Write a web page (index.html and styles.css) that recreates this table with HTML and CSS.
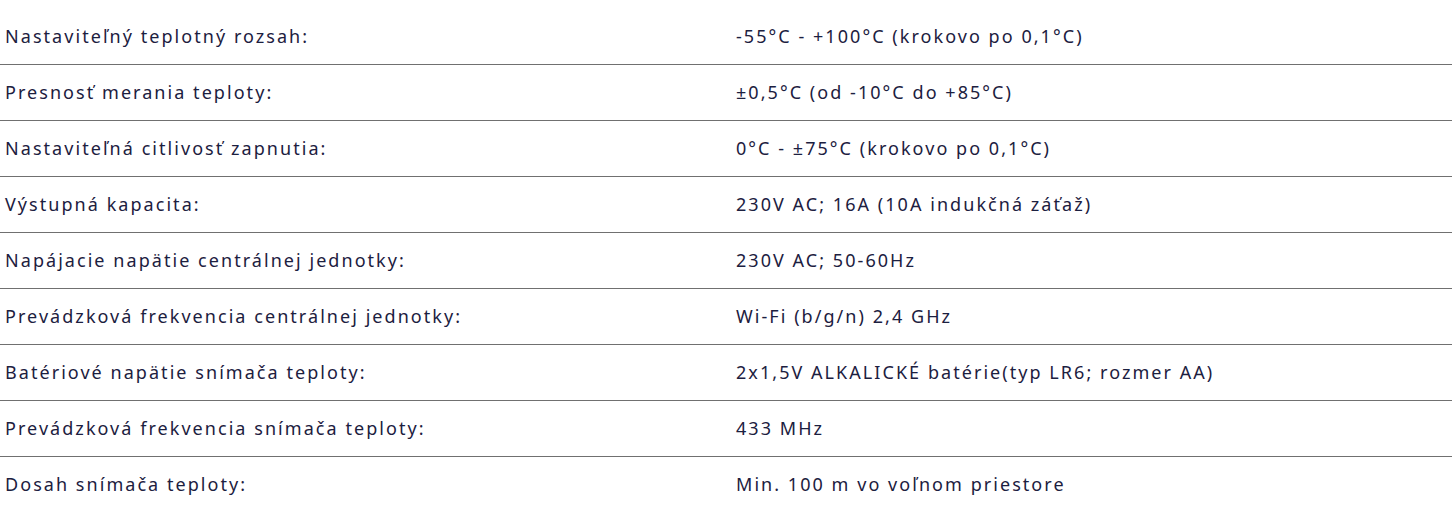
FILE: index.html
```html
<!DOCTYPE html>
<html lang="sk">
<head>
<meta charset="utf-8">
<title>Parametre</title>
<link rel="stylesheet" href="styles.css">
</head>
<body>
<div class="specs">
  <div class="row"><div class="label">Nastaviteľný teplotný rozsah:</div><div class="value">-55°C - +100°C (krokovo po 0,1°C)</div></div>
  <div class="row"><div class="label">Presnosť merania teploty:</div><div class="value">±0,5°C (od -10°C do +85°C)</div></div>
  <div class="row"><div class="label">Nastaviteľná citlivosť zapnutia:</div><div class="value">0°C - ±75°C (krokovo po 0,1°C)</div></div>
  <div class="row"><div class="label">Výstupná kapacita:</div><div class="value">230V AC; 16A (10A indukčná záťaž)</div></div>
  <div class="row"><div class="label">Napájacie napätie centrálnej jednotky:</div><div class="value">230V AC; 50-60Hz</div></div>
  <div class="row"><div class="label">Prevádzková frekvencia centrálnej jednotky:</div><div class="value">Wi-Fi (b/g/n) 2,4 GHz</div></div>
  <div class="row"><div class="label">Batériové napätie snímača teploty:</div><div class="value">2x1,5V ALKALICKÉ batérie(typ LR6; rozmer AA)</div></div>
  <div class="row"><div class="label">Prevádzková frekvencia snímača teploty:</div><div class="value">433 MHz</div></div>
  <div class="row"><div class="label">Dosah snímača teploty:</div><div class="value">Min. 100 m vo voľnom priestore</div></div>
</div>
</body>
</html>
```
FILE: styles.css
```css
html, body {
  margin: 0;
  padding: 0;
  background: #ffffff;
}
body {
  padding-top: 9px;
  font-family: "Noto Sans", "Open Sans", sans-serif;
  font-size: 18px;
  color: #1c2040;
  letter-spacing: 2.05px;
}
.specs {
  display: flex;
  flex-direction: column;
}
.row {
  display: grid;
  grid-template-columns: 731px 1fr;
  height: 55px;
  align-items: center;
  border-bottom: 1px solid #707070;
}
.label, .value {
  padding-left: 5px;
  padding-bottom: 2px;
  white-space: nowrap;
}
```
